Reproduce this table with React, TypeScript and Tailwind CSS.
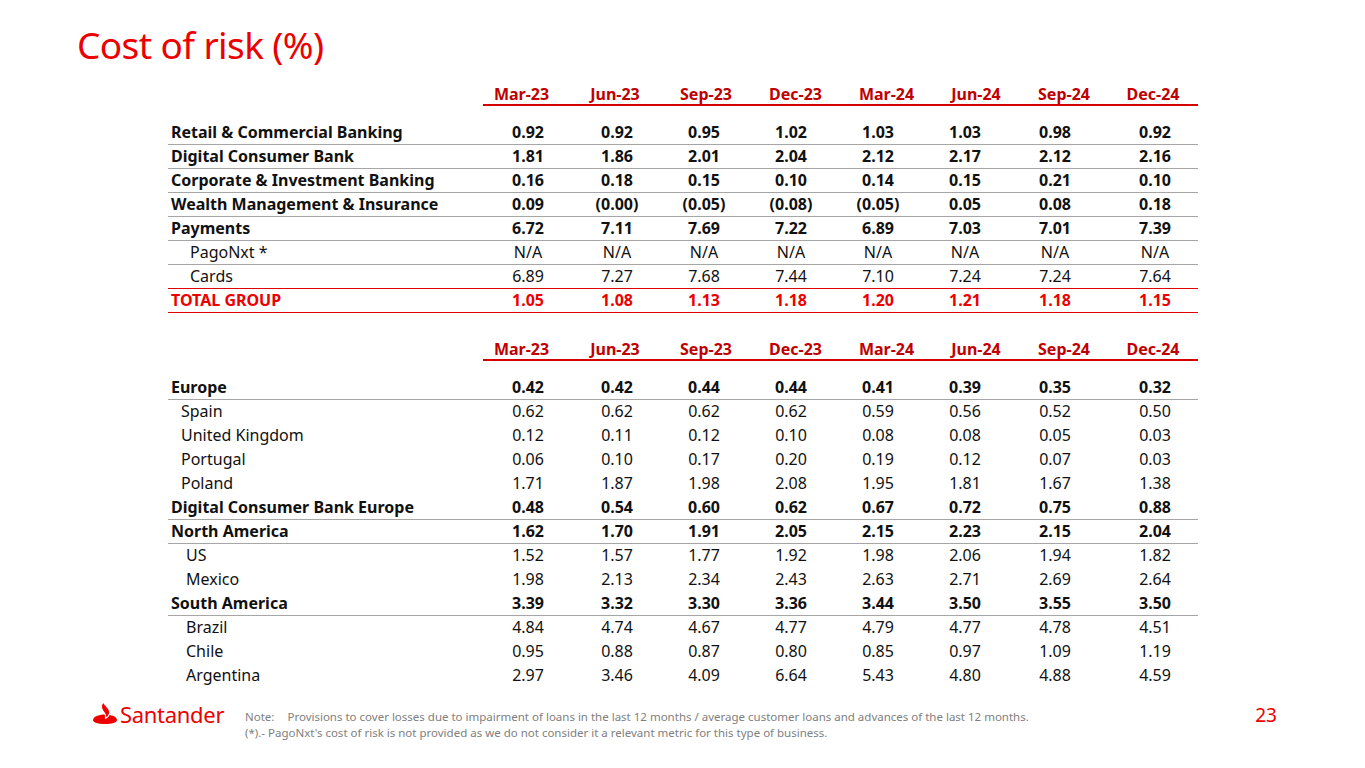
import React from "react";

const HEADERS = ["Mar-23", "Jun-23", "Sep-23", "Dec-23", "Mar-24", "Jun-24", "Sep-24", "Dec-24"];

// per-column nudge so values sit where the slide has them
const VAL_NUDGE = ["pl-[13px]", "pl-[4px]", "pr-[4px]", "pr-[9px]", "pr-[17px]", "pr-[22px]", "pr-[18px]", "pl-[4px]"];

type Row = {
  label: string;
  vals: string[];
  bold?: boolean;
  indent?: "sm" | "md" | "lg";
  line?: "grey" | "red" | "none";
  red?: boolean;
};

const segments: Row[] = [
  { label: "Retail & Commercial Banking", bold: true, line: "grey", vals: ["0.92", "0.92", "0.95", "1.02", "1.03", "1.03", "0.98", "0.92"] },
  { label: "Digital Consumer Bank", bold: true, line: "grey", vals: ["1.81", "1.86", "2.01", "2.04", "2.12", "2.17", "2.12", "2.16"] },
  { label: "Corporate & Investment Banking", bold: true, line: "grey", vals: ["0.16", "0.18", "0.15", "0.10", "0.14", "0.15", "0.21", "0.10"] },
  { label: "Wealth Management & Insurance", bold: true, line: "grey", vals: ["0.09", "(0.00)", "(0.05)", "(0.08)", "(0.05)", "0.05", "0.08", "0.18"] },
  { label: "Payments", bold: true, line: "grey", vals: ["6.72", "7.11", "7.69", "7.22", "6.89", "7.03", "7.01", "7.39"] },
  { label: "PagoNxt *", indent: "lg", line: "grey", vals: ["N/A", "N/A", "N/A", "N/A", "N/A", "N/A", "N/A", "N/A"] },
  { label: "Cards", indent: "lg", line: "red", vals: ["6.89", "7.27", "7.68", "7.44", "7.10", "7.24", "7.24", "7.64"] },
  { label: "TOTAL GROUP", bold: true, red: true, line: "red", vals: ["1.05", "1.08", "1.13", "1.18", "1.20", "1.21", "1.18", "1.15"] },
];

const regions: Row[] = [
  { label: "Europe", bold: true, line: "grey", vals: ["0.42", "0.42", "0.44", "0.44", "0.41", "0.39", "0.35", "0.32"] },
  { label: "Spain", indent: "sm", vals: ["0.62", "0.62", "0.62", "0.62", "0.59", "0.56", "0.52", "0.50"] },
  { label: "United Kingdom", indent: "sm", vals: ["0.12", "0.11", "0.12", "0.10", "0.08", "0.08", "0.05", "0.03"] },
  { label: "Portugal", indent: "sm", vals: ["0.06", "0.10", "0.17", "0.20", "0.19", "0.12", "0.07", "0.03"] },
  { label: "Poland", indent: "sm", vals: ["1.71", "1.87", "1.98", "2.08", "1.95", "1.81", "1.67", "1.38"] },
  { label: "Digital Consumer Bank Europe", bold: true, line: "grey", vals: ["0.48", "0.54", "0.60", "0.62", "0.67", "0.72", "0.75", "0.88"] },
  { label: "North America", bold: true, line: "grey", vals: ["1.62", "1.70", "1.91", "2.05", "2.15", "2.23", "2.15", "2.04"] },
  { label: "US", indent: "md", vals: ["1.52", "1.57", "1.77", "1.92", "1.98", "2.06", "1.94", "1.82"] },
  { label: "Mexico", indent: "md", vals: ["1.98", "2.13", "2.34", "2.43", "2.63", "2.71", "2.69", "2.64"] },
  { label: "South America", bold: true, line: "grey", vals: ["3.39", "3.32", "3.30", "3.36", "3.44", "3.50", "3.55", "3.50"] },
  { label: "Brazil", indent: "md", vals: ["4.84", "4.74", "4.67", "4.77", "4.79", "4.77", "4.78", "4.51"] },
  { label: "Chile", indent: "md", vals: ["0.95", "0.88", "0.87", "0.80", "0.85", "0.97", "1.09", "1.19"] },
  { label: "Argentina", indent: "md", vals: ["2.97", "3.46", "4.09", "6.64", "5.43", "4.80", "4.88", "4.59"] },
];

const GRID = "grid grid-cols-[307px_93px_94px_88px_91px_91px_88px_88px_90px]";

function HeaderRow() {
  return (
    <div>
      <div className={`${GRID} h-[20px] leading-[20px] text-[16px] font-bold text-[#c00000]`}>
        <div />
        {HEADERS.map((h) => (
          <div key={h} className="text-center">
            {h}
          </div>
        ))}
      </div>
      <div className="ml-[315px] h-[2px] bg-[#d40000]" />
    </div>
  );
}

function DataRow({ row }: { row: Row }) {
  const border =
    row.line === "red"
      ? "border-[#e00000]"
      : row.line === "grey"
      ? "border-[#a6a6a6]"
      : "border-transparent";
  const indent =
    row.indent === "lg" ? "pl-[22px]" : row.indent === "md" ? "pl-[18px]" : row.indent === "sm" ? "pl-[13px]" : "pl-[3px]";
  const text = row.red ? "text-[#ec0000]" : "text-[#111]";
  return (
    <div className={`${GRID} h-[24px] border-b ${border} ${text} ${row.bold ? "font-bold" : "font-normal"} text-[16px] leading-[23px]`}>
      <div className={`${indent} whitespace-nowrap`}>{row.label}</div>
      {row.vals.map((v, i) => (
        <div key={i} className={`text-center ${VAL_NUDGE[i]}`}>
          {v}
        </div>
      ))}
    </div>
  );
}

function Table({ rows }: { rows: Row[] }) {
  return (
    <div className="ml-[168px] w-[1030px]">
      <HeaderRow />
      <div className="mt-[15px]">
        {rows.map((r) => (
          <DataRow key={r.label} row={r} />
        ))}
      </div>
    </div>
  );
}

function Flame() {
  return (
    <svg width="24" height="22" viewBox="0 0 24 22" className="shrink-0">
      <path
        d="M0 18.2 C0 14.8 5.6 12.6 12 12.6 C18.4 12.6 24 14.8 24 18.2 C24 20.6 18.6 21.9 12 21.9 C5.4 21.9 0 20.6 0 18.2 Z"
        fill="#ec0000"
      />
      <path
        d="M10.5 0 C7.8 3.2 7.9 6 9.8 8.8 L11.9 11.8 C12.6 13 12.8 14.4 12.4 16.4 C16.8 14 17.8 10.2 15.6 7 L12.4 3 C11.4 2 10.7 1 10.5 0 Z"
        fill="#ec0000"
        stroke="#ffffff"
        strokeWidth="1.1"
        strokeLinejoin="round"
      />
    </svg>
  );
}

export default function App() {
  return (
    <div className="relative h-[768px] w-[1365px] overflow-hidden bg-white font-['Noto_Sans',sans-serif]">
      {/* title */}
      <div className="h-[84px] pl-[77px] pt-[26px]">
        <h1 className="text-[37px] leading-[38px] tracking-[-0.6px] font-normal text-[#ec0000]">Cost of risk (%)</h1>
      </div>

      {/* business segments */}
      <Table rows={segments} />

      {/* regions */}
      <div className="mt-[26px]">
        <Table rows={regions} />
      </div>

      {/* footer */}
      <div className="mt-[14px] flex items-start">
        <div className="flex w-[152px] items-start gap-[3px] pl-[93px] box-content">
          <Flame />
          <span className="mt-[1px] text-[22px] leading-[22px] tracking-[-0.3px] text-[#ec0000]">Santander</span>
        </div>
        <div className="pt-[7px] text-[11.5px] leading-[16px] text-[#808080]">
          <div>
            <span className="mr-[13px]">Note:</span>
            Provisions to cover losses due to impairment of loans in the last 12 months / average customer loans and advances of the last 12 months.
          </div>
          <div>(*).- PagoNxt's cost of risk is not provided as we do not consider it a relevant metric for this type of business.</div>
        </div>
        <div className="ml-auto pr-[88px] pt-[4px] text-[19px] leading-[19px] text-[#ec0000]">23</div>
      </div>
    </div>
  );
}
